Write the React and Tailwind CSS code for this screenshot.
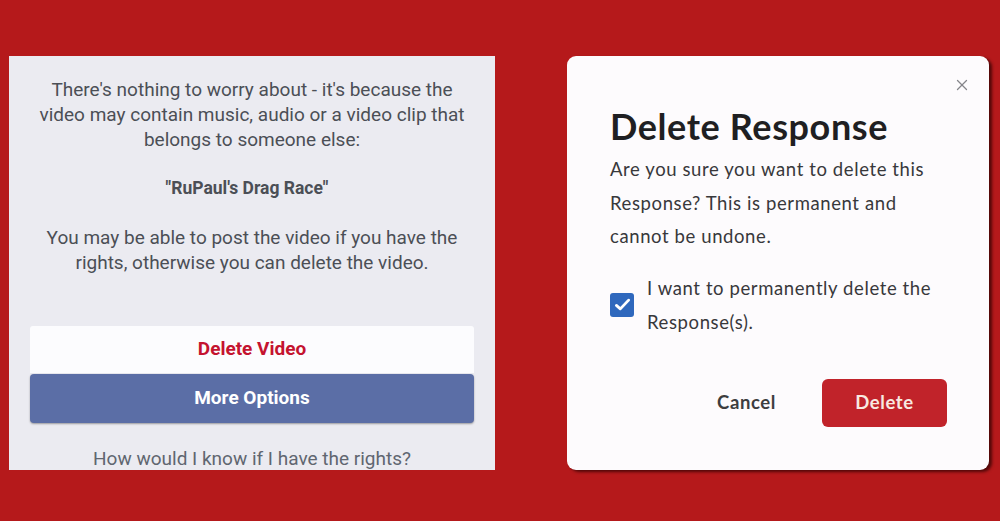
import React from 'react'
import { X } from 'lucide-react'

function CopyrightNotice() {
  return (
    <div className="w-[486px] h-[414px] bg-[#ebebf1] flex flex-col items-center font-['Roboto',sans-serif] overflow-hidden">
      <p className="pt-[21px] text-center text-[19px] leading-[25px] text-[#4b4f56] px-[24px]">
        There's nothing to worry about - it's because the video may contain music, audio or a video clip that belongs to someone else:
      </p>
      <p className="mt-[24px] text-center text-[17.5px] leading-[25px] font-bold text-[#4b4f56] pr-[10px]">
        "RuPaul's Drag Race"
      </p>
      <p className="mt-[24px] text-center text-[19px] leading-[25px] text-[#4b4f56] px-[24px]">
        You may be able to post the video if you have the rights, otherwise you can delete the video.
      </p>

      {/* action buttons */}
      <div className="mt-[51px] w-full px-[21px] flex flex-col gap-[1px]">
        <button className="h-[47px] w-full bg-[#fcfcfe] rounded-t-[3px] text-[19px] font-bold text-[#c4132f]">
          Delete Video
        </button>
        <button className="h-[49px] w-full bg-[#5b6ea6] rounded-[4px] shadow-[0_1px_2px_rgba(0,0,0,0.35)] text-[19px] font-bold text-white">
          More Options
        </button>
      </div>
      <p className="mt-[24px] text-[19px] leading-[24px] text-[#606670]">How would I know if I have the rights?</p>
    </div>
  )
}

function DeleteDialog() {
  return (
    <div className="relative w-[422px] h-[414px] bg-[#fdfbfd] rounded-[9px] shadow-[3px_2px_3px_rgba(40,0,0,0.7)] pl-[43px] pr-[42px] pt-[50px] font-['Lato',sans-serif]">
      <button className="absolute top-[20px] right-[18px] text-[#85858a]">
        <X className="w-[18px] h-[18px]" strokeWidth={1.7} />
      </button>
      <h2 className="text-[36px] leading-[40px] font-bold tracking-[0.6px] text-[#1f1f22]">Delete Response</h2>
      <p className="mt-[7px] text-[18.5px] leading-[33.5px] tracking-[0.6px] text-[#38383b] pr-[10px]">
        Are you sure you want to delete this Response? This is permanent and cannot be undone.
      </p>
      <label className="mt-[17px] flex items-center gap-[13px]">
        <span className="w-[24px] h-[24px] shrink-0 rounded-[3px] bg-[#2f68bd] flex items-center justify-center">
          <svg viewBox="0 0 24 24" className="w-[21px] h-[21px]" fill="none" stroke="white" strokeWidth="3.2" strokeLinecap="round" strokeLinejoin="round">
            <path d="M5 13l4.5 4L19 7" />
          </svg>
        </span>
        <span className="text-[18.5px] leading-[34px] tracking-[0.6px] text-[#38383b] pr-[10px]">
          I want to permanently delete the Response(s).
        </span>
      </label>
      <div className="mt-[40px] flex items-center justify-end gap-[46px]">
        <button className="text-[18.5px] font-bold tracking-[0.6px] text-[#3d3d40]">Cancel</button>
        <button className="w-[125px] h-[48px] rounded-[6px] bg-[#c1232a] text-[18.5px] font-bold tracking-[0.6px] text-[#f8e9e1]">
          Delete
        </button>
      </div>
    </div>
  )
}

export default function App() {
  return (
    <div className="w-[1000px] h-[521px] bg-[#b5191b] flex items-start gap-[72px] pt-[56px] pl-[9px] overflow-hidden">
      <CopyrightNotice />
      <DeleteDialog />
    </div>
  )
}
